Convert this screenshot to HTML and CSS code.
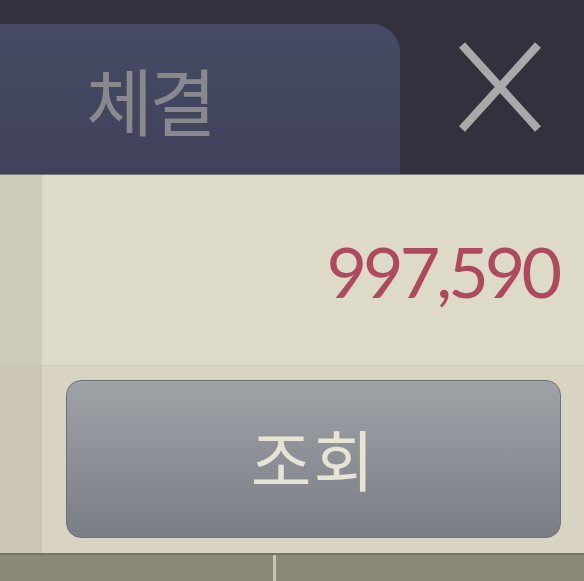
FILE: index.html
```html
<!DOCTYPE html>
<html lang="ko">
<head>
<meta charset="utf-8">
<link rel="stylesheet" href="styles.css">
</head>
<body>
<div class="screen">
  <header class="topbar">
    <div class="tab"><span class="tab-label">체결</span></div>
    <div class="close">
      <svg width="84" height="92" viewBox="0 0 84 92"><path d="M4 4 L80 88 M80 4 L4 88" stroke="#a9a9ab" stroke-width="8" stroke-linecap="butt" fill="none"/></svg>
    </div>
  </header>
  <div class="row row-value">
    <div class="side"></div>
    <div class="main value-cell"><span class="value">997,590</span></div>
  </div>
  <div class="row row-action">
    <div class="side"></div>
    <div class="main action-cell"><button class="btn">조회</button></div>
  </div>
  <div class="footer">
    <div class="foot-cell left"></div>
    <div class="foot-cell right"></div>
  </div>
</div>
</body>
</html>
```
FILE: styles.css
```css
html, body { margin: 0; padding: 0; }
body { width: 584px; height: 581px; overflow: hidden; background: #33313e; font-family: "Noto Sans CJK KR", "Noto Sans", sans-serif; }
.screen { display: flex; flex-direction: column; width: 584px; height: 581px; }
.topbar { height: 175px; box-sizing: border-box; display: flex; align-items: flex-end; background: #33313e; border-bottom: 1px solid #7a7a80; flex: none; }
.tab { width: 400px; height: 150px; box-sizing: border-box; border-top-right-radius: 28px; background: linear-gradient(#464a64, #3f4259); display: flex; align-items: center; padding-left: 86px; padding-bottom: 2px; }
.tab-label { font-size: 73px; color: #88888d; font-weight: 400; letter-spacing: -4px; line-height: 1; }
.close { flex: 1; height: 100%; display: flex; align-items: center; justify-content: center; padding-left: 16px; padding-top: 2px; }
.row { display: flex; flex: none; }
.side { width: 42px; flex: none; }
.main { flex: 1; }
.row-value { height: 190px; background: #dedac8; border-bottom: 1px solid #d0ccb9; }
.row-value .side { background: #cfcbb9; }
.value-cell { display: flex; align-items: center; justify-content: flex-end; padding-right: 26px; padding-top: 2px; }
.value { font-family: "Lato", sans-serif; font-size: 70px; font-weight: 400; color: #ad4a5e; letter-spacing: -4px; line-height: 1; }
.row-action { height: 187px; background: #d8d4c1; }
.row-action .side { background: #cac6b3; }
.action-cell { display: flex; padding: 14px 23px 15px 24px; }
.btn { flex: 1; border: 1px solid #6e7177; border-radius: 15px; background: linear-gradient(#9fa2a7, #7a7d84); color: #e7e4d4; font-family: "Noto Sans CJK KR", sans-serif; font-size: 66px; font-weight: 400; letter-spacing: 2px; padding: 0 0 4px 0; }
.footer { flex: 1; display: flex; background: #8a8876; border-top: 2px solid #77755f; }
.foot-cell.left { width: 273px; border-right: 3px solid #c9c7b2; }
.foot-cell.right { flex: 1; }
```
